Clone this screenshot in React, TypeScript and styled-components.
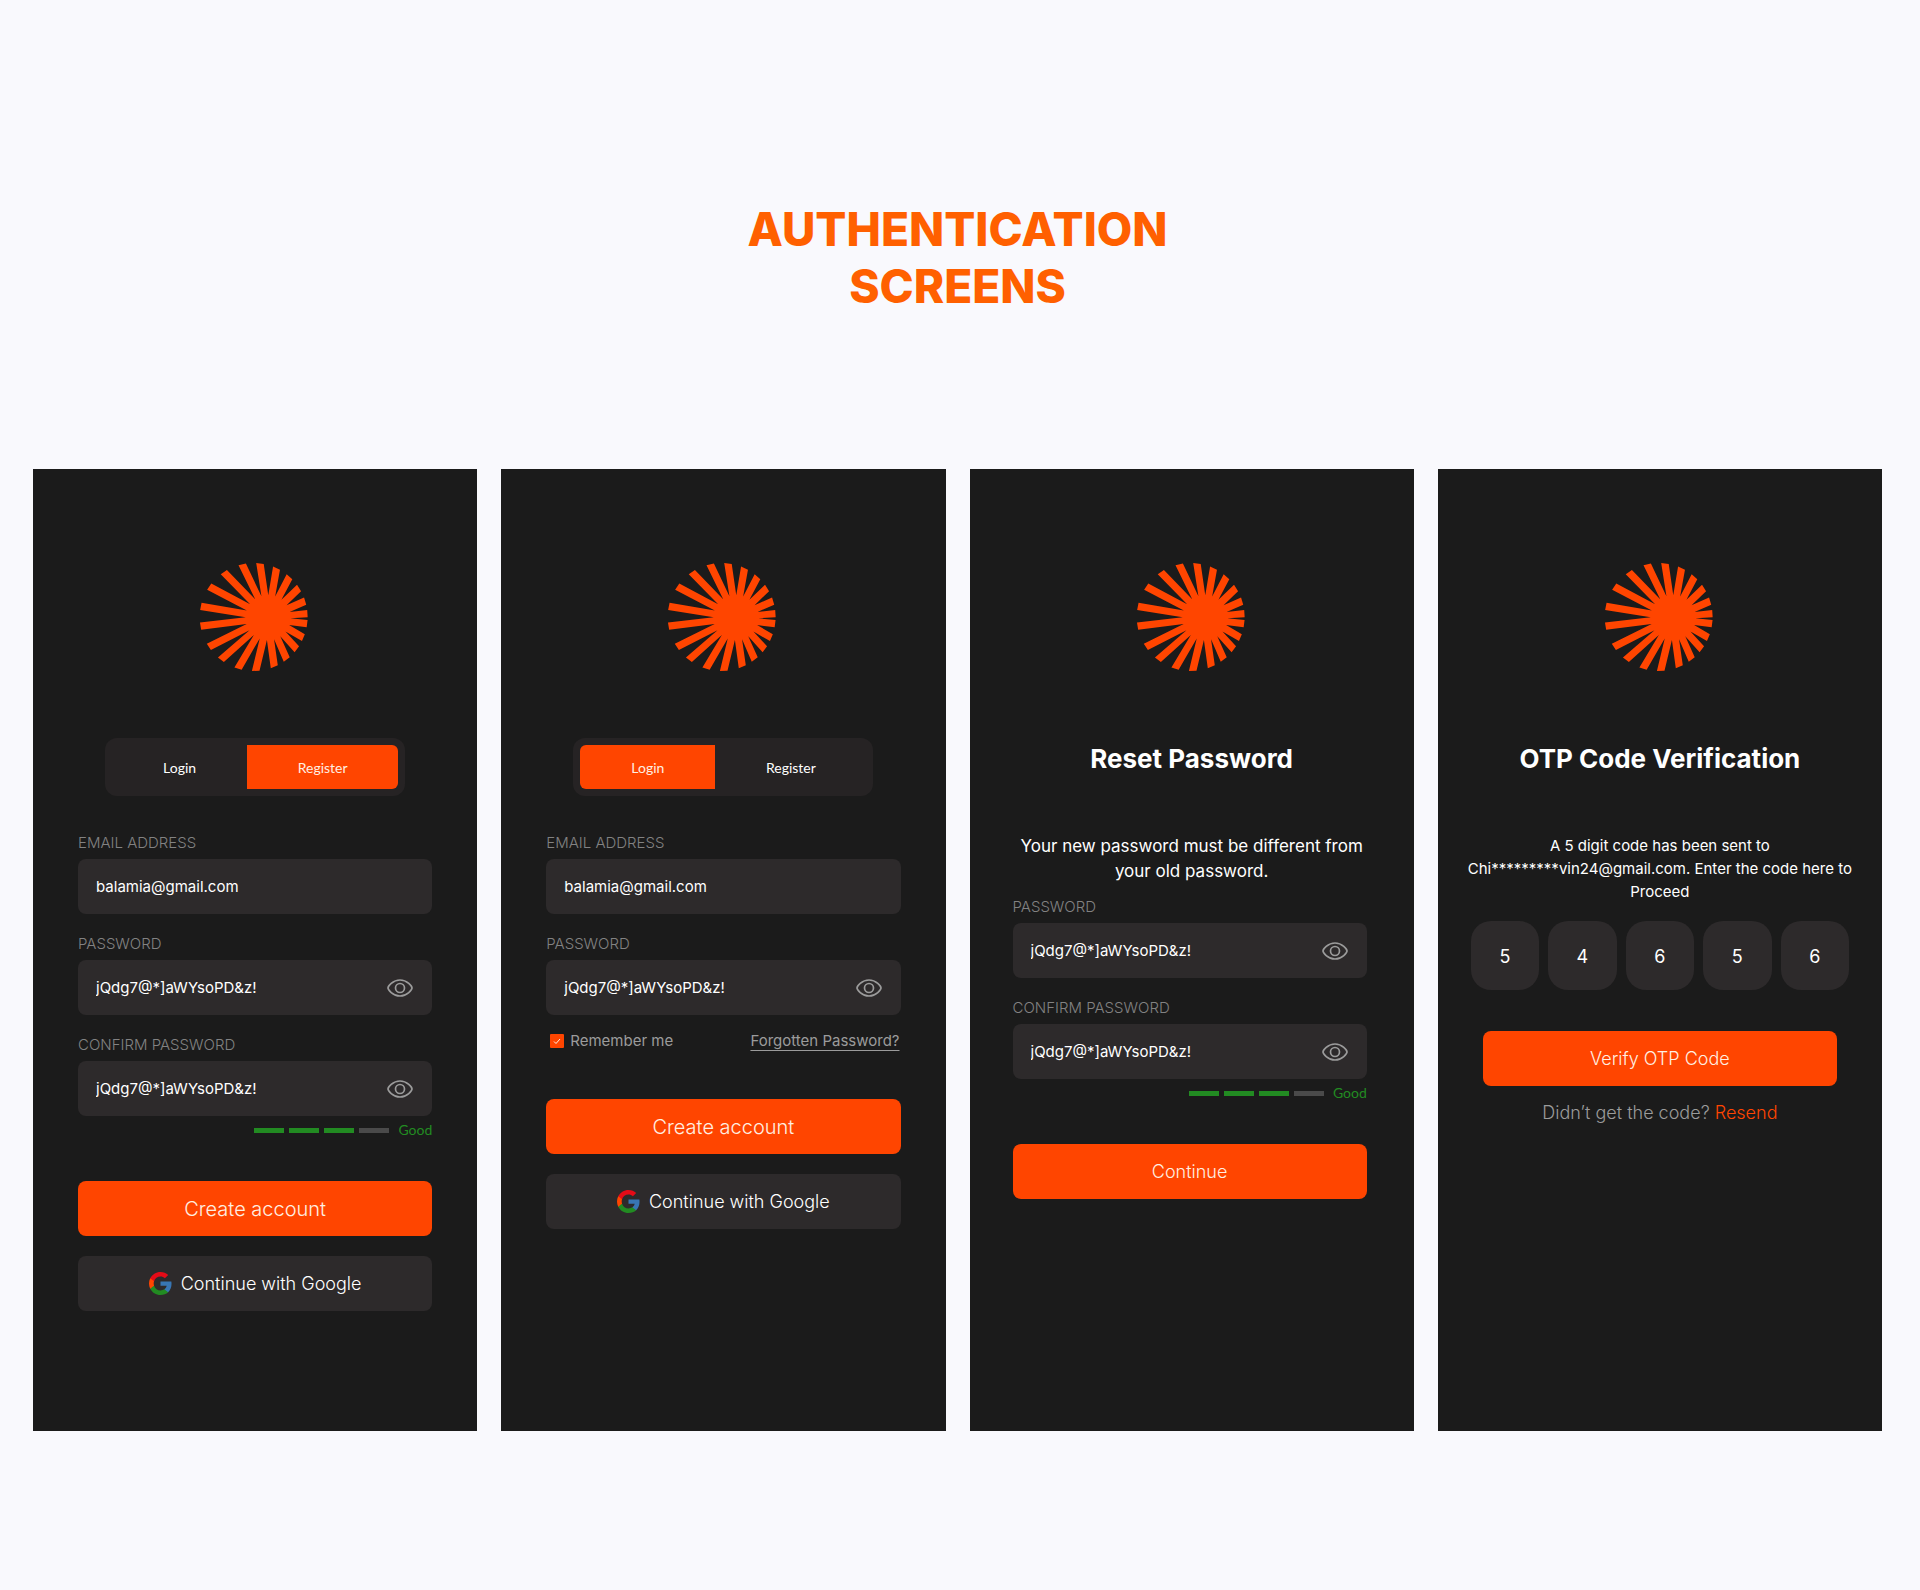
import React, { useId, useState } from "react";
import styled, { createGlobalStyle, css } from "styled-components";

const color = {
  page: "#f9f9fd",
  title: "#ff6000",
  card: "#1b1b1b",
  field: "#2d2a2b",
  tabs: "#262324",
  accent: "#ff4500",
  onAccent: "#ffefe2",
  text: "#ffffff",
  label: "#828282",
  muted: "#9b9b9b",
  good: "#228b22",
  idle: "#4a4a4a",
};

const GlobalStyle = createGlobalStyle`
  *, *::before, *::after { box-sizing: border-box; }
  body {
    margin: 0;
    background: ${color.page};
    color: ${color.text};
    font-family: Inter, "Liberation Sans", sans-serif;
  }
  h1, h2, p { margin: 0; }
  button, input { font: inherit; color: inherit; }
  button { cursor: pointer; }
`;

const Page = styled.main`
  padding: 201px 38px 159px 33px;
`;

const Title = styled.h1`
  margin-bottom: 154px;
  color: ${color.title};
  font-size: 46px;
  line-height: 57px;
  font-weight: 800;
  text-align: center;
`;

const Board = styled.div`
  display: grid;
  grid-template-columns: repeat(4, minmax(0, 1fr));
  gap: 24px;

  @media (max-width: 1500px) {
    grid-template-columns: repeat(2, minmax(0, 1fr));
  }
  @media (max-width: 820px) {
    grid-template-columns: minmax(0, 1fr);
  }
`;

const Card = styled.section`
  display: flex;
  flex-direction: column;
  align-items: center;
  padding: 94px 0 120px;
  background: ${color.card};
`;

const Logo = styled.svg`
  display: block;
  width: 110px;
  height: 108px;
  margin-bottom: 67px;
`;

const Tabs = styled.div`
  display: grid;
  grid-template-columns: 135px 151px;
  padding: 7px;
  margin-bottom: 38px;
  border-radius: 12px;
  background: ${color.tabs};
`;

const Tab = styled.button<{ $active: boolean; $side: "left" | "right" }>`
  height: 44px;
  padding: 0;
  border: 0;
  border-radius: ${({ $side }) => ($side === "left" ? "6px 0 0 6px" : "0 6px 6px 0")};
  background: ${({ $active }) => ($active ? color.accent : "transparent")};
  color: ${({ $active }) => ($active ? color.onAccent : color.text)};
  font-family: Lato, sans-serif;
  font-size: 14px;
`;

const Heading = styled.h2`
  margin-bottom: 54px;
  font-size: 26px;
  line-height: 42px;
  font-weight: 700;
  text-align: center;
`;

const Note = styled.p<{ $small?: boolean }>`
  text-align: center;
  ${({ $small }) =>
    $small
      ? css`
          margin-bottom: 18px;
          font-size: 15px;
          line-height: 23px;
        `
      : css`
          margin-bottom: 14px;
          font-size: 17px;
          line-height: 25px;
        `}
`;

const Form = styled.form<{ $shifted?: boolean }>`
  align-self: stretch;
  display: flex;
  flex-direction: column;
  padding: ${({ $shifted }) => ($shifted ? "0 47px 0 43px" : "0 45px")};
`;

const FieldGroup = styled.div`
  display: flex;
  flex-direction: column;
  gap: 21px;
`;

const FieldRow = styled.div`
  display: flex;
  flex-direction: column;
  gap: 7px;
`;

const Label = styled.label`
  color: ${color.label};
  font-size: 15px;
  line-height: 18px;
  font-weight: 300;
  text-transform: uppercase;
`;

const FieldBox = styled.div`
  display: flex;
  align-items: center;
  gap: 8px;
  height: 55px;
  padding: 0 19px 0 18px;
  border-radius: 8px;
  background: ${color.field};
`;

const TextInput = styled.input`
  flex: 1;
  min-width: 0;
  height: 100%;
  padding: 0;
  border: 0;
  outline: 0;
  background: transparent;
  font-size: 15px;
`;

const IconButton = styled.button`
  display: flex;
  padding: 0;
  border: 0;
  background: none;
  color: ${color.muted};
`;

const Strength = styled.div`
  display: flex;
  justify-content: flex-end;
  align-items: center;
  margin-top: 5px;
`;

const Bars = styled.div`
  display: flex;
  gap: 5px;
  margin-right: 9px;
`;

const Bar = styled.span<{ $on: boolean }>`
  width: 30px;
  height: 5px;
  background: ${({ $on }) => ($on ? color.good : color.idle)};
`;

const StrengthText = styled.span`
  color: ${color.good};
  font-family: Lato, sans-serif;
  font-size: 14px;
  line-height: 18px;
`;

const Options = styled.div`
  display: flex;
  justify-content: space-between;
  align-items: center;
  margin-top: 16px;
  padding: 0 1px 0 4px;
  color: ${color.muted};
  font-size: 15px;
  line-height: 20px;
  font-weight: 400;
`;

const Remember = styled.label`
  display: flex;
  align-items: center;
  gap: 6px;
`;

const Tick = styled.span`
  display: grid;
  width: 14px;
  height: 14px;

  & > * {
    grid-area: 1 / 1;
  }
  svg {
    width: 14px;
    height: 14px;
    pointer-events: none;
  }
`;

const TickInput = styled.input`
  appearance: none;
  width: 14px;
  height: 14px;
  margin: 0;
  border-radius: 1px;
  background: ${color.idle};

  &:checked {
    background: ${color.accent};
  }
`;

const MutedLink = styled.a`
  color: inherit;
  text-decoration: underline;
  text-decoration-thickness: 1px;
  text-underline-offset: 4px;
`;

const Actions = styled.div<{ $gap: number }>`
  display: flex;
  flex-direction: column;
  gap: 20px;
  margin-top: ${({ $gap }) => $gap}px;
`;

const Button = styled.button<{ $tone: "accent" | "dark"; $large?: boolean }>`
  display: flex;
  justify-content: center;
  align-items: center;
  gap: 9px;
  height: 55px;
  padding: 0;
  border: 0;
  border-radius: 8px;
  background: ${({ $tone }) => ($tone === "accent" ? color.accent : color.field)};
  color: ${({ $tone }) => ($tone === "accent" ? color.onAccent : color.text)};
  font-size: ${({ $large }) => ($large ? 20 : 18)}px;
  font-weight: 300;
`;

const CodeRow = styled.div`
  align-self: stretch;
  display: grid;
  grid-template-columns: repeat(5, minmax(0, 1fr));
  gap: 9px;
  padding: 0 33px;
`;

const CodeInput = styled.input`
  width: 100%;
  height: 69px;
  padding: 2px 0 0;
  border: 0;
  outline: 0;
  border-radius: 20px;
  background: ${color.field};
  font-size: 18px;
  text-align: center;
`;

const Resend = styled.p`
  margin-top: 15px;
  color: ${color.muted};
  font-size: 18px;
  line-height: 24px;
  font-weight: 300;
  text-align: center;

  a {
    color: ${color.accent};
    text-decoration: none;
  }
`;

/* Sunburst: rays leave an off-centre hub and end on the outer circle. */
const HUB = { x: 264, y: 232 };
const RIM = { x: 221, y: 230, r: 162 };
const CORE = 67;
const HALF_RAY = 11;
const RAY_TIPS: [number, number][] = [
  [240, 70], [289, 87], [327, 112], [355, 145], [374, 183],
  [381, 220], [380, 250], [370, 292], [349, 325], [320, 357],
  [283, 380], [227, 392], [175, 383], [123, 358], [86, 320],
  [62, 257], [62, 198], [90, 140], [133, 97], [188, 75],
];

function sunburstPath(): string {
  const angles = RAY_TIPS.map(([x, y]) => Math.atan2(y - HUB.y, x - HUB.x));
  const points: string[] = [];
  const corner = (angle: number, side: number) => {
    const dx = Math.cos(angle);
    const dy = Math.sin(angle);
    const ox = HUB.x - dy * side * HALF_RAY;
    const oy = HUB.y + dx * side * HALF_RAY;
    const b = (ox - RIM.x) * dx + (oy - RIM.y) * dy;
    const c = (ox - RIM.x) ** 2 + (oy - RIM.y) ** 2 - RIM.r ** 2;
    const t = -b + Math.sqrt(b * b - c);
    return `${(ox + dx * t).toFixed(1)} ${(oy + dy * t).toFixed(1)}`;
  };
  angles.forEach((angle, i) => {
    let next = angles[(i + 1) % angles.length];
    if (next < angle) next += Math.PI * 2;
    const mid = (angle + next) / 2;
    points.push(corner(angle, -1), corner(angle, 1));
    points.push(
      `${(HUB.x + Math.cos(mid) * CORE).toFixed(1)} ${(HUB.y + Math.sin(mid) * CORE).toFixed(1)}`
    );
  });
  return `M${points.join("L")}Z`;
}

const SUNBURST = sunburstPath();

const BrandLogo = () => (
  <Logo viewBox="60 68 330 324" aria-hidden="true">
    <path d={SUNBURST} fill={color.accent} />
  </Logo>
);

const EyeIcon = () => (
  <svg width="26" height="18" viewBox="0 0 26 18" fill="none" stroke="currentColor" strokeWidth="1.7" aria-hidden="true">
    <path d="M1 9C1 7.6 5.6 1 13 1s12 6.6 12 8-4.600 8-12 8S1 10.400 1 9Z" strokeLinejoin="round" />
    <circle cx="13" cy="9" r="4.500" />
  </svg>
);

const GoogleIcon = () => (
  <svg width="23" height="23" viewBox="1 1 22 22" aria-hidden="true">
    <path fill="#3876b4" d="M22.560 12.250c0-.78-.07-1.530-.2-2.250H12v4.260h5.920c-.26 1.370-1.040 2.530-2.210 3.310v2.770h3.570c2.080-1.920 3.280-4.740 3.280-8.090z" />
    <path fill="#228b22" d="M12 23c2.970 0 5.460-.98 7.280-2.660l-3.570-2.770c-.98.66-2.230 1.060-3.710 1.060-2.860 0-5.290-1.930-6.160-4.530H2.180v2.840C3.990 20.530 7.700 23 12 23z" />
    <path fill="#ff4500" d="M5.840 14.090c-.22-.66-.35-1.360-.35-2.090s.13-1.430.35-2.090V7.070H2.180C1.430 8.550 1 10.220 1 12s.43 3.450 1.180 4.930l2.850-2.220.81-.62z" />
    <path fill="#e50b17" d="M12 5.380c1.620 0 3.060.56 4.210 1.640l3.150-3.150C17.450 2.090 14.970 1 12 1 7.700 1 3.990 3.470 2.180 7.070l3.660 2.840c.87-2.600 3.300-4.530 6.160-4.530z" />
  </svg>
);

interface FieldProps {
  label: string;
  value: string;
  secret?: boolean;
}

const Field = ({ label, value, secret }: FieldProps) => {
  const id = useId();
  const [hidden, setHidden] = useState(false);
  return (
    <FieldRow>
      <Label htmlFor={id}>{label}</Label>
      <FieldBox>
        <TextInput
          id={id}
          type={secret ? (hidden ? "password" : "text") : "email"}
          defaultValue={value}
          spellCheck={false}
        />
        {secret && (
          <IconButton type="button" aria-label="Toggle password visibility" onClick={() => setHidden(!hidden)}>
            <EyeIcon />
          </IconButton>
        )}
      </FieldBox>
    </FieldRow>
  );
};

const AuthTabs = ({ active }: { active: "login" | "register" }) => (
  <Tabs>
    <Tab type="button" $side="left" $active={active === "login"}>Login</Tab>
    <Tab type="button" $side="right" $active={active === "register"}>Register</Tab>
  </Tabs>
);

const StrengthMeter = ({ score }: { score: number }) => (
  <Strength>
    <Bars>
      {[1, 2, 3, 4].map((step) => (
        <Bar key={step} $on={step <= score} />
      ))}
    </Bars>
    <StrengthText>Good</StrengthText>
  </Strength>
);

const AccountActions = ({ gap }: { gap: number }) => (
  <Actions $gap={gap}>
    <Button type="button" $tone="accent" $large>Create account</Button>
    <Button type="button" $tone="dark">
      <GoogleIcon />
      Continue with Google
    </Button>
  </Actions>
);

const EMAIL = "balamia@gmail.com";
const SECRET = "jQdg7@*]aWYsoPD&z!";
const CODE = ["5", "4", "6", "5", "6"];

export default function App() {
  return (
    <>
      <GlobalStyle />
      <Page>
        <Title>
          AUTHENTICATION
          <br />
          SCREENS
        </Title>
        <Board>
          <Card>
            <BrandLogo />
            <AuthTabs active="register" />
            <Form>
              <FieldGroup>
                <Field label="Email address" value={EMAIL} />
                <Field label="Password" value={SECRET} secret />
                <Field label="Confirm password" value={SECRET} secret />
              </FieldGroup>
              <StrengthMeter score={3} />
              <AccountActions gap={42} />
            </Form>
          </Card>

          <Card>
            <BrandLogo />
            <AuthTabs active="login" />
            <Form>
              <FieldGroup>
                <Field label="Email address" value={EMAIL} />
                <Field label="Password" value={SECRET} secret />
              </FieldGroup>
              <Options>
                <Remember>
                  <Tick>
                    <TickInput type="checkbox" defaultChecked />
                    <svg viewBox="0 0 14 14" fill="none" stroke={color.onAccent} aria-hidden="true">
                      <path d="M4 7.500l2 2 4-4.500" />
                    </svg>
                  </Tick>
                  Remember me
                </Remember>
                <MutedLink href="#forgotten">Forgotten Password?</MutedLink>
              </Options>
              <AccountActions gap={48} />
            </Form>
          </Card>

          <Card>
            <BrandLogo />
            <Heading>Reset Password</Heading>
            <Note>
              Your new password must be different from
              <br />
              your old password.
            </Note>
            <Form $shifted>
              <FieldGroup>
                <Field label="Password" value={SECRET} secret />
                <Field label="Confirm password" value={SECRET} secret />
              </FieldGroup>
              <StrengthMeter score={3} />
              <Actions $gap={42}>
                <Button type="button" $tone="accent">Continue</Button>
              </Actions>
            </Form>
          </Card>

          <Card>
            <BrandLogo />
            <Heading>OTP Code Verification</Heading>
            <Note $small>
              A 5 digit code has been sent to
              <br />
              Chi*********vin24@gmail.com. Enter the code here to
              <br />
              Proceed
            </Note>
            <CodeRow>
              {CODE.map((digit, i) => (
                <CodeInput key={i} inputMode="numeric" maxLength={1} aria-label={`Digit ${i + 1}`} defaultValue={digit} />
              ))}
            </CodeRow>
            <Form>
              <Actions $gap={41}>
                <Button type="button" $tone="accent">Verify OTP Code</Button>
              </Actions>
              <Resend>
                Didn’t get the code? <a href="#resend">Resend</a>
              </Resend>
            </Form>
          </Card>
        </Board>
      </Page>
    </>
  );
}
